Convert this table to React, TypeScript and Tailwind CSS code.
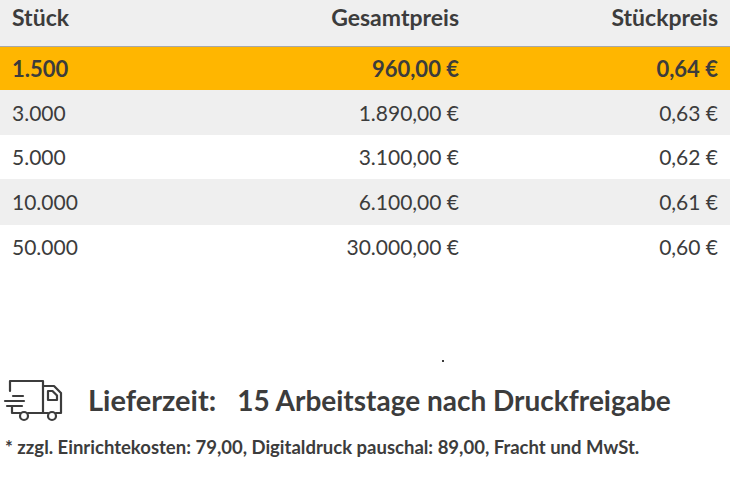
const rows = [
  { qty: "1.500", total: "960,00 €", unit: "0,64 €", cls: "bg-[#ffb600] font-bold text-[22px] h-[43px]" },
  { qty: "3.000", total: "1.890,00 €", unit: "0,63 €", cls: "bg-[#efefef] text-[21px] h-[45px]" },
  { qty: "5.000", total: "3.100,00 €", unit: "0,62 €", cls: "bg-white text-[21px] h-[44px]" },
  { qty: "10.000", total: "6.100,00 €", unit: "0,61 €", cls: "bg-[#efefef] text-[21px] h-[46px]" },
  { qty: "50.000", total: "30.000,00 €", unit: "0,60 €", cls: "bg-white text-[21px] h-[44px]" },
];

const Truck = () => (
  <svg width="60" height="44" viewBox="0 0 60 44" fill="none" stroke="#3c3c3c" strokeWidth="2.2" strokeLinecap="round" strokeLinejoin="round">
    <path d="M7 13 V3 H40 V35" />
    <path d="M40 8 H51 L58 15 V35 H53" />
    <path d="M45 13 H49.5 L54 17.5 V22 H45 Z" />
    <path d="M25 35 H45" />
    <path d="M9 29 V35 H17" />
    <path d="M10 18 H20" />
    <path d="M2 23 H21" />
    <path d="M4 28 H19" />
    <circle cx="21" cy="38" r="4" />
    <circle cx="49" cy="38" r="4" />
  </svg>
);

export default function App() {
  return (
    <div className="w-[730px] h-[478px] bg-white text-[#3c3c3c] font-['Lato',sans-serif] overflow-hidden">
      <div className="grid grid-cols-[200px_247px_259px] h-[47px] bg-[#efefef] border-b border-[#a8a8a8] items-start pt-[6px] px-3 text-[23px] leading-none font-bold">
        <div>Stück</div>
        <div className="text-right">Gesamtpreis</div>
        <div className="text-right">Stückpreis</div>
      </div>
      {rows.map((r) => (
        <div key={r.qty} className={`grid grid-cols-[200px_247px_259px] items-center px-3 ${r.cls}`}>
          <div>{r.qty}</div>
          <div className="text-right">{r.total}</div>
          <div className="text-right">{r.unit}</div>
        </div>
      ))}
      <div className="h-[95px] flex items-end pb-[2px]">
        <div className="ml-[442px] w-[2px] h-[2px] bg-[#3c3c3c]" />
      </div>
      <div className="flex items-center mt-[14px] ml-[3px] h-[44px]">
        <Truck />
        <span className="ml-[25px] text-[29px] font-bold">Lieferzeit:</span>
        <span className="ml-[21px] text-[28px] font-bold">15 Arbeitstage nach Druckfreigabe</span>
      </div>
      <div className="mt-[16px] ml-[5px] text-[18.5px] font-bold leading-none">
        * zzgl. Einrichtekosten: 79,00, Digitaldruck pauschal: 89,00, Fracht und MwSt.
      </div>
    </div>
  );
}
